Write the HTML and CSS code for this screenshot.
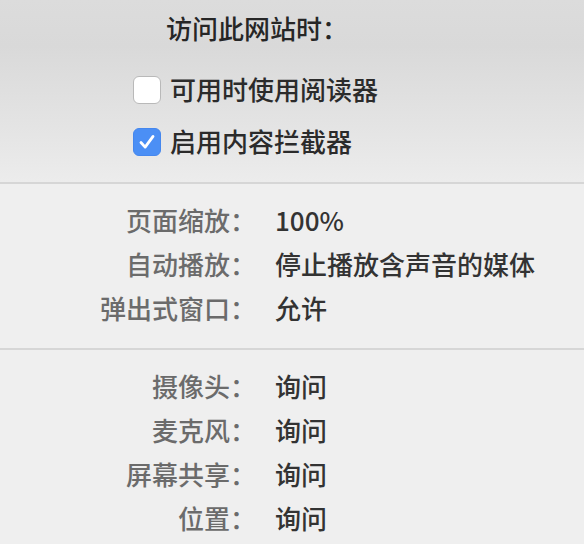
FILE: index.html
```html
<!DOCTYPE html>
<html lang="zh-CN">
<head>
<meta charset="utf-8">
<link rel="stylesheet" href="styles.css">
</head>
<body>
<div class="popover">
  <div class="header">
    <div class="title">访问此网站时：</div>
    <label class="check-row">
      <span class="box"></span>
      <span class="check-text">可用时使用阅读器</span>
    </label>
    <label class="check-row">
      <span class="box checked">
        <svg viewBox="0 0 28 28" width="28" height="28"><path d="M7.5 14.5 L12 19.5 L20.5 8" fill="none" stroke="#fff" stroke-width="3" stroke-linecap="round" stroke-linejoin="round"/></svg>
      </span>
      <span class="check-text">启用内容拦截器</span>
    </label>
  </div>
  <div class="section">
    <div class="label">页面缩放：</div><div class="value">100%</div>
    <div class="label">自动播放：</div><div class="value">停止播放含声音的媒体</div>
    <div class="label">弹出式窗口：</div><div class="value">允许</div>
  </div>
  <div class="section last">
    <div class="label">摄像头：</div><div class="value">询问</div>
    <div class="label">麦克风：</div><div class="value">询问</div>
    <div class="label">屏幕共享：</div><div class="value">询问</div>
    <div class="label">位置：</div><div class="value">询问</div>
  </div>
</div>
</body>
</html>
```

FILE: styles.css
```css
html, body {
  margin: 0;
  padding: 0;
  background: #efefef;
}
body {
  font-family: "Noto Sans CJK SC", "Noto Sans", sans-serif;
  font-size: 26px;
  font-weight: 500;
  width: 584px;
  height: 544px;
  overflow: hidden;
}
.popover {
  display: flex;
  flex-direction: column;
}
.header {
  box-sizing: border-box;
  border-bottom: 2px solid #d6d6d6;
  height: 184px;
  background: linear-gradient(to bottom, #dcdcdc 0%, #d9d9d9 25%, #e4e4e4 70%, #ececec 100%);
  padding: 6px 0 0 0;
  display: flex;
  flex-direction: column;
}
.title {
  padding-left: 166px;
  line-height: 44px;
  color: #262626;
  margin-bottom: 14px;
}
.check-row {
  display: flex;
  align-items: center;
  height: 52px;
  padding-left: 133px;
}
.box {
  width: 28px;
  height: 28px;
  box-sizing: border-box;
  border-radius: 6px;
  background: #ffffff;
  border: 1px solid #b9b9b9;
  margin-right: 9px;
  display: flex;
  align-items: center;
  justify-content: center;
}
.box.checked {
  background: #4b8ff5;
  border-color: #4587ee;
}
.box svg {
  display: block;
}
.check-text {
  color: #2b2b2b;
  line-height: 44px;
  margin-top: -2px;
}
.section {
  display: grid;
  grid-template-columns: 256px 1fr;
  column-gap: 19px;
  padding: 14px 0 18px 0;
  border-bottom: 2px solid #d6d6d6;
  line-height: 44px;
}
.section.last {
  border-bottom: none;
}
.label {
  text-align: right;
  color: #6b6b6b;
}
.value {
  color: #333333;
}
```
